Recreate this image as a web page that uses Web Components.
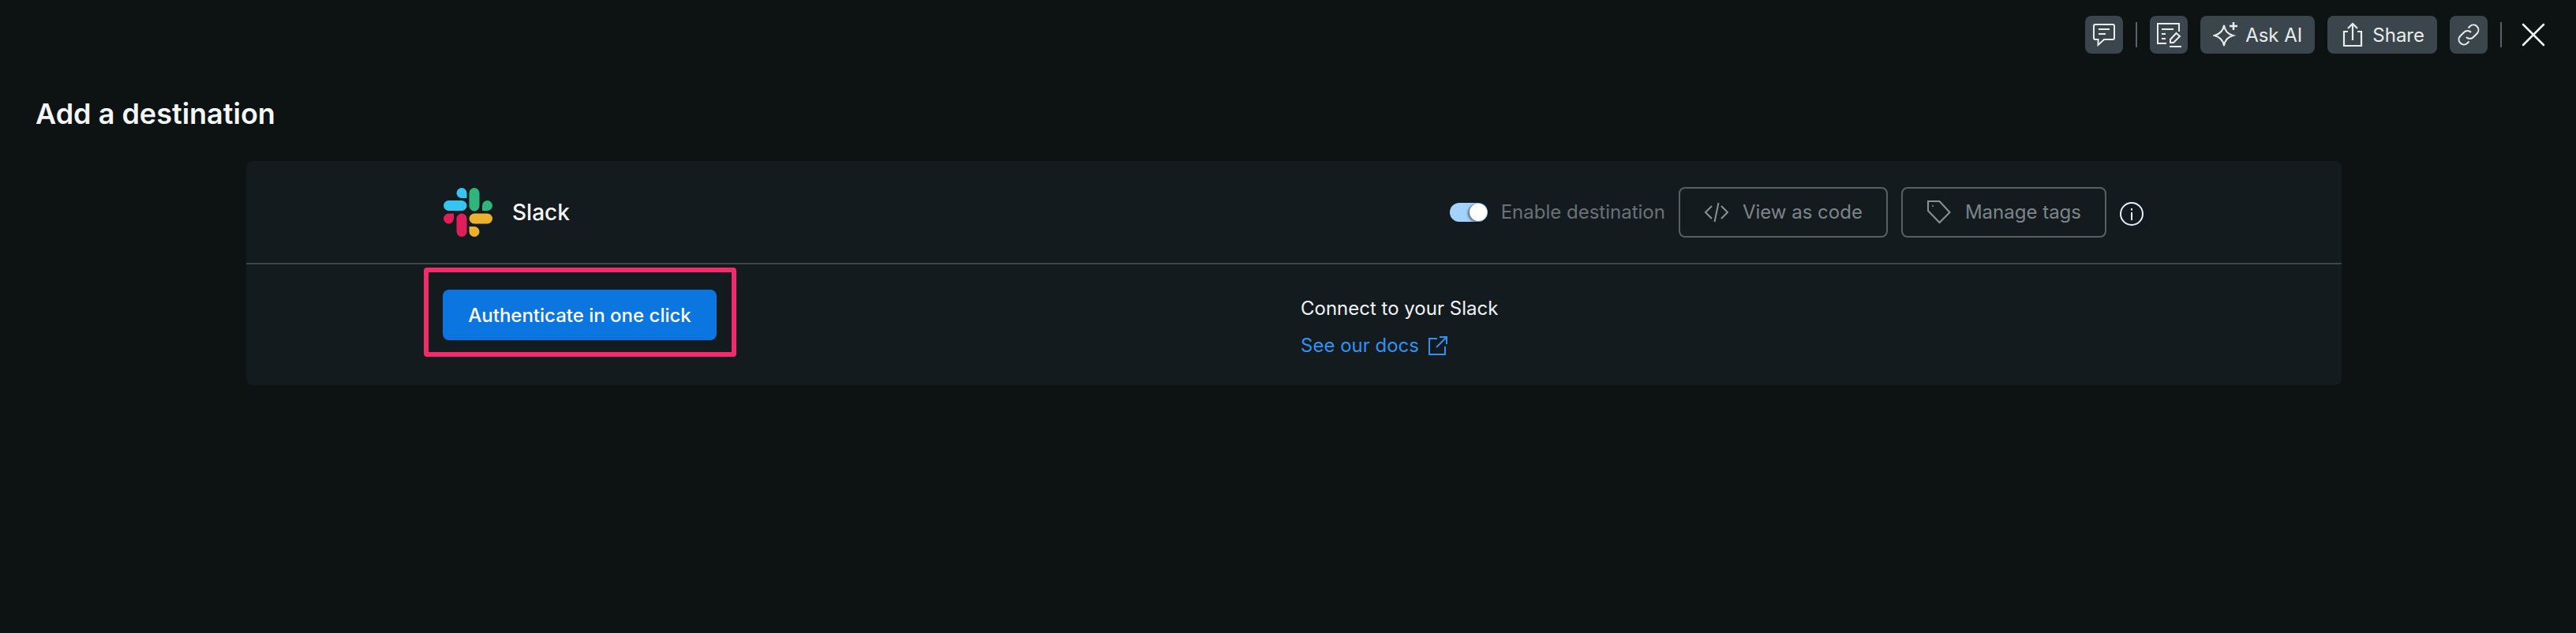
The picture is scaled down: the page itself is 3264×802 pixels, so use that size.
<!DOCTYPE html>
<html>
<head>
<meta charset="utf-8">
<title>Add a destination</title>
<style>
  html, body { margin: 0; height: 100%; background: #0d1213; }
  body { font-family: Inter, "Liberation Sans", sans-serif; color: #f0f3f5; overflow: hidden; }
</style>
</head>
<body>
<app-page>
  <top-bar slot="top">
    <bar-button><svg slot="icon" width="32" height="32" viewBox="0 0 32 32" fill="none" stroke="#e8ecee" stroke-width="2"><path d="M5 3h22a2 2 0 0 1 2 2v15a2 2 0 0 1-2 2H16l-7.500 7v-7H5a2 2 0 0 1-2-2V5a2 2 0 0 1 2-2zM9 9h14M9 15h9"/></svg></bar-button>
    <bar-sep></bar-sep>
    <bar-button><svg slot="icon" width="32" height="32" viewBox="0 0 32 32" fill="none" stroke="#e8ecee" stroke-width="2"><path d="M13 27H2V2h27v10M7 9h15M7 15h5M7 21h5M17 31h15M18 26v-4l7.500-8 4.500 4-8 8z"/></svg></bar-button>
    <bar-button label="Ask AI"><svg slot="icon" width="32" height="32" viewBox="0 0 32 32" fill="none" stroke="#e8ecee" stroke-width="2"><path d="M14 4c1 7 4 11 11.500 13C18 19 15 23 14 30 13 23 9 19 2 17 9 15 13 11 14 4z"/><path d="M26 0v10M21 5h10" stroke-width="2.500"/></svg></bar-button>
    <bar-button label="Share"><svg slot="icon" width="32" height="32" viewBox="0 0 32 32" fill="none" stroke="#e8ecee" stroke-width="2.200"><path d="M10 12H5v18h22V12h-5M16 23V3M10 8l6-6 6 6"/></svg></bar-button>
    <bar-button><svg slot="icon" width="32" height="32" viewBox="0 0 32 32" fill="none" stroke="#e8ecee" stroke-width="2"><path d="M13 19a6 6 0 0 0 9 0l5-5a6.400 6.400 0 0 0-9-9l-2.500 2.500M19 13a6 6 0 0 0-9 0l-5 5a6.400 6.400 0 0 0 9 9l2.500-2.500"/></svg></bar-button>
    <bar-sep></bar-sep>
    <close-icon></close-icon>
  </top-bar>
  <page-title slot="top">Add a destination</page-title>
  <dest-card>
    <dest-logo slot="head-left" name="Slack"></dest-logo>
    <dest-toggle slot="head-right">Enable destination</dest-toggle>
    <ghost-button slot="head-right" label="View as code"><svg slot="icon" width="32" height="32" viewBox="0 0 32 32" fill="none" stroke="#8a9298" stroke-width="2"><path d="M10 8l-8 8 8 8M22 8l8 8-8 8M18.500 4l-5 24"/></svg></ghost-button>
    <ghost-button slot="head-right" label="Manage tags"><svg slot="icon" width="32" height="32" viewBox="0 0 32 32" fill="none" stroke="#8a9298" stroke-width="2"><path d="M2 2h14.500L29.500 16 16.500 29 2 14z"/><circle cx="8" cy="8" r="1" fill="#8a9298" stroke="none"/></svg></ghost-button>
    <info-icon slot="head-right"></info-icon>
    <auth-button slot="body-left">Authenticate in one click</auth-button>
    <docs-note slot="body-right" text="Connect to your Slack" link="See our docs"></docs-note>
  </dest-card>
</app-page>

<script>
class AppPage extends HTMLElement {
  constructor() {
    super();
    this.attachShadow({ mode: 'open' }).innerHTML = `
<style>
  :host { display: block; height: 802px; background: #0d1213; }
  main { padding: 0 297px 0 312px; }
</style>
<slot name="top"></slot>
<main><slot></slot></main>`;
  }
}

class TopBar extends HTMLElement {
  constructor() {
    super();
    this.attachShadow({ mode: 'open' }).innerHTML = `
<style>
  :host {
    display: flex;
    justify-content: flex-end;
    align-items: center;
    gap: 16px;
    height: 48px;
    padding: 20px 38px 0 0;
  }
</style>
<slot></slot>`;
  }
}

class BarButton extends HTMLElement {
  constructor() {
    super();
    this.attachShadow({ mode: 'open' }).innerHTML = `
<style>
  :host {
    display: flex;
    align-items: center;
    justify-content: center;
    min-width: 48px;
    height: 48px;
    box-sizing: border-box;
    background: #3b464c;
    border-radius: 8px;
    font-size: 24px;
    font-weight: 400;
    color: #e8ecee;
  }
  :host([label]) { gap: 9px; padding: 0 16px; }
  ::slotted(svg) { display: block; }
</style>
<slot name="icon"></slot><span></span>`;
  }
  connectedCallback() {
    this.shadowRoot.querySelector('span').textContent = this.getAttribute('label') || '';
  }
}

class BarSep extends HTMLElement {
  constructor() {
    super();
    this.attachShadow({ mode: 'open' }).innerHTML = `
<style>:host { display: block; width: 2px; height: 32px; background: #596268; }</style>`;
  }
}

class CloseIcon extends HTMLElement {
  constructor() {
    super();
    this.attachShadow({ mode: 'open' }).innerHTML = `
<style>:host { display: block; width: 32px; height: 32px; margin-left: 8px; } svg { display: block; }</style>
<svg width="32" height="32" viewBox="0 0 32 32" stroke="#f0f3f5" stroke-width="2.500" stroke-linecap="round"><path d="M3 3l26 26M29 3L3 29"/></svg>`;
  }
}

class PageTitle extends HTMLElement {
  constructor() {
    super();
    this.attachShadow({ mode: 'open' }).innerHTML = `
<style>
  :host {
    display: block;
    padding: 56px 0 0 45px;
    height: 80px;
    line-height: 40px;
    font-size: 36px;
    font-weight: 600;
    color: #f4f6f7;
  }
</style>
<slot></slot>`;
  }
}

class DestCard extends HTMLElement {
  constructor() {
    super();
    this.attachShadow({ mode: 'open' }).innerHTML = `
<style>
  :host { display: block; background: #141b1f; border-radius: 8px; height: 284px; }
  .head {
    display: flex;
    align-items: center;
    justify-content: space-between;
    box-sizing: border-box;
    height: 131px;
    padding: 0 251px 0 249px;
    border-bottom: 2px solid #3b464c;
  }
  .right { display: flex; align-items: center; gap: 17px; }
  .body { display: grid; grid-template-columns: 1336px 1fr; padding: 32px 0 0 0; }
  .left { padding-left: 249px; }
</style>
<div class="head">
  <slot name="head-left"></slot>
  <div class="right"><slot name="head-right"></slot></div>
</div>
<div class="body">
  <div class="left"><slot name="body-left"></slot></div>
  <div><slot name="body-right"></slot></div>
</div>`;
  }
}

class DestLogo extends HTMLElement {
  constructor() {
    super();
    this.attachShadow({ mode: 'open' }).innerHTML = `
<style>
  :host { display: flex; align-items: center; gap: 24px; font-size: 28px; font-weight: 500; color: #f4f6f7; }
  svg { display: block; }
</style>
<svg width="64" height="64" viewBox="0 0 64 64">
  <path fill="#36c5f0" d="M24 1a6.500 6.500 0 0 0 0 13h6.500V7.500A6.500 6.500 0 0 0 24 1z"/>
  <rect fill="#36c5f0" x="1" y="17" width="29.500" height="13" rx="6.500"/>
  <rect fill="#2eb67d" x="33.500" y="1" width="13" height="29.500" rx="6.500"/>
  <path fill="#2eb67d" d="M63 23.500a6.500 6.500 0 0 0-13 0V30h6.500a6.500 6.500 0 0 0 6.500-6.500z"/>
  <path fill="#e01e5a" d="M1 40a6.500 6.500 0 0 0 13 0v-6.500H7.500A6.500 6.500 0 0 0 1 40z"/>
  <rect fill="#e01e5a" x="17.500" y="33.500" width="13" height="29.500" rx="6.500"/>
  <rect fill="#ecb22e" x="33.500" y="33.500" width="29.500" height="13" rx="6.500"/>
  <path fill="#ecb22e" d="M40 63a6.500 6.500 0 0 0 0-13h-6.500v6.500A6.500 6.500 0 0 0 40 63z"/>
</svg>
<span></span>`;
  }
  connectedCallback() {
    this.shadowRoot.querySelector('span').textContent = this.getAttribute('name');
  }
}

class DestToggle extends HTMLElement {
  constructor() {
    super();
    this.attachShadow({ mode: 'open' }).innerHTML = `
<style>
  :host { display: flex; align-items: center; gap: 17px; font-size: 24px; color: #6a7278; }
  .track { position: relative; width: 48px; height: 24px; border-radius: 12px; background: #a3d2fb; }
  .knob {
    position: absolute; right: 1px; top: 1px; width: 22px; height: 22px;
    border-radius: 50%; background: #fff; box-shadow: -2px 1px 3px rgba(0,0,0,.5);
  }
</style>
<div class="track"><div class="knob"></div></div>
<slot></slot>`;
  }
}

class GhostButton extends HTMLElement {
  constructor() {
    super();
    this.attachShadow({ mode: 'open' }).innerHTML = `
<style>
  :host {
    display: flex;
    align-items: center;
    gap: 17px;
    height: 64px;
    box-sizing: border-box;
    padding: 0 30px;
    border: 2px solid #566067;
    border-radius: 8px;
    font-size: 24px;
    font-weight: 400;
    color: #7d858b;
  }
</style>
<slot name="icon"></slot><span></span>`;
  }
  connectedCallback() {
    this.shadowRoot.querySelector('span').textContent = this.getAttribute('label');
  }
}

class InfoIcon extends HTMLElement {
  constructor() {
    super();
    this.attachShadow({ mode: 'open' }).innerHTML = `
<style>:host { display: block; width: 30px; height: 30px; margin-top: 5px; } svg { display: block; }</style>
<svg width="30" height="30" viewBox="0 0 30 30" fill="none" stroke="#e3f1fd" stroke-width="2"><circle cx="15" cy="15" r="14"/><path d="M15 13v10"/><path d="M15 8v2.500"/></svg>`;
  }
}

class AuthButton extends HTMLElement {
  constructor() {
    super();
    this.attachShadow({ mode: 'open' }).innerHTML = `
<style>
  :host {
    position: relative;
    display: inline-flex;
    align-items: center;
    justify-content: center;
    width: 347px;
    height: 64px;
    border-radius: 8px;
    background: #0b76df;
    color: #fff;
    font-size: 24px;
    font-weight: 500;
  }
  .frame {
    position: absolute;
    inset: -28px -25px -21px -24px;
    border: 6px solid #f32b6d;
    border-radius: 4px;
  }
</style>
<slot></slot><div class="frame"></div>`;
  }
}

class DocsNote extends HTMLElement {
  constructor() {
    super();
    this.attachShadow({ mode: 'open' }).innerHTML = `
<style>
  :host { display: block; font-size: 24px; color: #f0f3f5; padding-top: 4px; }
  p { margin: 0; line-height: 40px; }
  a { display: flex; align-items: center; gap: 11px; margin-top: 7px; line-height: 40px; color: #3291f0; text-decoration: none; }
  svg { display: block; }
</style>
<p></p>
<a><span></span><svg width="26" height="26" viewBox="0 0 26 26" fill="none" stroke="#3291f0" stroke-width="2"><path d="M12 4H2v20h20V14M11 15L24 2M15 2h9v9"/></svg></a>`;
  }
  connectedCallback() {
    this.shadowRoot.querySelector('p').textContent = this.getAttribute('text');
    this.shadowRoot.querySelector('a span').textContent = this.getAttribute('link');
  }
}

customElements.define('app-page', AppPage);
customElements.define('top-bar', TopBar);
customElements.define('bar-button', BarButton);
customElements.define('bar-sep', BarSep);
customElements.define('close-icon', CloseIcon);
customElements.define('page-title', PageTitle);
customElements.define('dest-card', DestCard);
customElements.define('dest-logo', DestLogo);
customElements.define('dest-toggle', DestToggle);
customElements.define('ghost-button', GhostButton);
customElements.define('info-icon', InfoIcon);
customElements.define('auth-button', AuthButton);
customElements.define('docs-note', DocsNote);
</script>
</body>
</html>
